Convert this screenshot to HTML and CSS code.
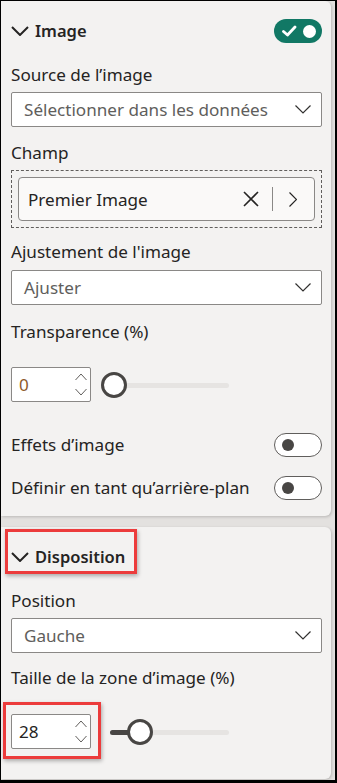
FILE: index.html
```html
<!DOCTYPE html>
<html lang="fr">

<head>
    <meta charset="UTF-8">
    <meta name="viewport" content="width=device-width, initial-scale=1.0">
    <title>Format - Image</title>
    <link rel="stylesheet" href="styles.css">
</head>

<body>

    <div class="frame">

        <!-- Carte Image -->
        <section class="card">
            <div class="card-head">
                <svg class="head-chevron" width="18" height="10" viewBox="0 0 18 10"><path d="M1 1 L9 9 L17 1" fill="none" stroke="#252423" stroke-width="2"/></svg>
                <h2 class="card-title">Image</h2>
                <span class="toggle toggle-on">
                    <svg width="15" height="12" viewBox="0 0 15 12"><path d="M1.5 6.5 L5.5 10 L13 2" fill="none" stroke="#fff" stroke-width="2.8" stroke-linecap="round" stroke-linejoin="round"/></svg>
                    <span class="knob"></span>
                </span>
            </div>

            <div class="field f-source">
                <div class="label">Source de l’image</div>
                <div class="select">
                    <span>Sélectionner dans les données</span>
                    <svg width="16" height="9" viewBox="0 0 16 9"><path d="M0.5 0.5 L8 8 L15.5 0.5" fill="none" stroke="#323130" stroke-width="1.2"/></svg>
                </div>
            </div>

            <div class="field f-champ">
                <div class="label">Champ</div>
                <div class="dropzone">
                    <div class="pill">
                        <span class="pill-text">Premier Image</span>
                        <svg class="pill-x" width="16" height="16" viewBox="0 0 16 16"><path d="M1 1 L15 15 M15 1 L1 15" fill="none" stroke="#252423" stroke-width="1.6"/></svg>
                        <span class="pill-sep"></span>
                        <svg class="pill-next" width="8" height="15" viewBox="0 0 8 15"><path d="M0.5 0.5 L7.5 7.5 L0.5 14.5" fill="none" stroke="#252423" stroke-width="1.2"/></svg>
                    </div>
                </div>
            </div>

            <div class="field f-fit">
                <div class="label">Ajustement de l'image</div>
                <div class="select">
                    <span>Ajuster</span>
                    <svg width="16" height="9" viewBox="0 0 16 9"><path d="M0.5 0.5 L8 8 L15.5 0.5" fill="none" stroke="#323130" stroke-width="1.2"/></svg>
                </div>
            </div>

            <div class="field f-transp">
                <div class="label">Transparence (%)</div>
                <div class="slider-row">
                    <div class="number">
                        <span class="number-value warm">0</span>
                        <span class="spin">
                            <svg width="12" height="8" viewBox="0 0 12 8"><path d="M0.5 7 L6 1 L11.5 7" fill="none" stroke="#605e5c" stroke-width="1"/></svg>
                            <svg width="12" height="8" viewBox="0 0 12 8"><path d="M0.5 1 L6 7 L11.5 1" fill="none" stroke="#605e5c" stroke-width="1"/></svg>
                        </span>
                    </div>
                    <div class="slider">
                        <span class="track"></span>
                        <span class="thumb" style="left: 0px;"></span>
                    </div>
                </div>
            </div>

            <div class="switch-row r-effects">
                <span class="label">Effets d’image</span>
                <span class="toggle toggle-off"><span class="knob"></span></span>
            </div>

            <div class="switch-row r-bg">
                <span class="label">Définir en tant qu’arrière-plan</span>
                <span class="toggle toggle-off"><span class="knob"></span></span>
            </div>
        </section>

        <!-- Carte Disposition -->
        <section class="card card-layout">
            <div class="card-head">
                <svg class="head-chevron" width="18" height="10" viewBox="0 0 18 10"><path d="M1 1 L9 9 L17 1" fill="none" stroke="#252423" stroke-width="2"/></svg>
                <h2 class="card-title">Disposition</h2>
            </div>

            <div class="field f-position">
                <div class="label">Position</div>
                <div class="select">
                    <span>Gauche</span>
                    <svg width="16" height="9" viewBox="0 0 16 9"><path d="M0.5 0.5 L8 8 L15.5 0.5" fill="none" stroke="#323130" stroke-width="1.2"/></svg>
                </div>
            </div>

            <div class="field f-size">
                <div class="label">Taille de la zone d’image (%)</div>
                <div class="slider-row">
                    <div class="number">
                        <span class="number-value">28</span>
                        <span class="spin">
                            <svg width="12" height="8" viewBox="0 0 12 8"><path d="M0.5 7 L6 1 L11.5 7" fill="none" stroke="#605e5c" stroke-width="1"/></svg>
                            <svg width="12" height="8" viewBox="0 0 12 8"><path d="M0.5 1 L6 7 L11.5 1" fill="none" stroke="#605e5c" stroke-width="1"/></svg>
                        </span>
                    </div>
                    <div class="slider">
                        <span class="track"></span>
                        <span class="fill" style="width: 28px;"></span>
                        <span class="thumb" style="left: 26px;"></span>
                    </div>
                </div>
            </div>

            <!-- encadrés rouges d'annotation -->
            <span class="mark mark-head"></span>
            <span class="mark mark-size"></span>
        </section>

    </div>

</body>

</html>
```

FILE: styles.css
```css
* {
    margin: 0;
    padding: 0;
    box-sizing: border-box;
}

body {
    font-family: "Noto Sans", "Open Sans", sans-serif;
    color: #252423;
    background-color: #fff;
}

.frame {
    width: 337px;
    height: 783px;
    border: solid #000;
    border-width: 1px 2px 3px 1px;
    background-color: #e3e1df;
    overflow: hidden;
}

.card {
    position: relative;
    width: 330px;
    height: 515px;
    padding: 18px 9px 0 10px;
    background-color: #f3f2f1;
    border-radius: 0 6px 6px 0;
    box-shadow: 1px 1px 3px rgba(0, 0, 0, 0.18);
}

.card-layout {
    height: 252px;
    margin-top: 11px;
}

.card-head {
    display: flex;
    align-items: center;
    height: 24px;
}

.head-chevron {
    margin-right: 6px;
}

.card-title {
    font-size: 16.5px;
    font-weight: 600;
    line-height: 24px;
}

.toggle {
    display: flex;
    align-items: center;
    width: 48px;
    height: 24px;
    border-radius: 12px;
    margin-left: auto;
}

.toggle-on {
    background-color: #117865;
    padding: 0 6px 0 8px;
    justify-content: space-between;
}

.toggle-on .knob {
    width: 13px;
    height: 13px;
    border-radius: 50%;
    background-color: #fff;
}

.toggle-off {
    background-color: #fff;
    border: 1px solid #605e5c;
    padding-left: 7px;
}

.toggle-off .knob {
    width: 12px;
    height: 12px;
    border-radius: 50%;
    background-color: #484644;
}

.label {
    font-size: 17.1px;
    line-height: 20px;
    color: #252423;
}

.field .label {
    margin-bottom: 7px;
}

.f-source { margin-top: 22px; }
.f-champ { margin-top: 16px; }
.f-fit { margin-top: 14px; }
.f-fit .label { margin-bottom: 8px; }
.f-transp { margin-top: 17px; }
.f-transp .label { margin-bottom: 25px; }
.f-position { margin-top: 22px; }
.f-size { margin-top: 15px; }
.f-size .label { margin-bottom: 26px; }

.select {
    display: flex;
    align-items: center;
    justify-content: space-between;
    height: 35px;
    padding: 0 10px 0 12px;
    background-color: #fff;
    border: 1px solid #8a8886;
    border-radius: 2px;
    font-size: 17.1px;
    color: #605e5c;
}

.dropzone {
    height: 58px;
    padding: 6px;
    border: 1px dashed #605e5c;
}

.pill {
    display: flex;
    align-items: center;
    height: 44px;
    padding: 0 17px 0 9px;
    background-color: #faf9f8;
    border: 1px solid #8a8886;
    border-radius: 4px;
    font-size: 17.1px;
}

.pill-text {
    flex: 1;
}

.pill-sep {
    width: 1px;
    height: 24px;
    margin: 0 16px 0 13px;
    background-color: #8a8886;
}

.slider-row {
    display: flex;
    align-items: center;
    height: 35px;
}

.number {
    display: flex;
    align-items: center;
    justify-content: space-between;
    width: 80px;
    height: 35px;
    padding: 0 3px 0 7px;
    background-color: #fff;
    border: 1px solid #8a8886;
    border-radius: 2px;
    font-size: 17.1px;
}

.number-value.warm {
    color: #8e5a2a;
}

.spin {
    display: flex;
    flex-direction: column;
    gap: 7px;
}

.spin svg {
    display: block;
}

.slider {
    position: relative;
    width: 128px;
    height: 26px;
    margin-left: 10px;
}

.track,
.fill {
    position: absolute;
    top: 11px;
    left: 9px;
    height: 5px;
    border-radius: 3px;
}

.track {
    right: 0;
    background-color: #e6e4e2;
}

.fill {
    background-color: #484644;
}

.thumb {
    position: absolute;
    top: 0;
    width: 26px;
    height: 26px;
    border-radius: 50%;
    background-color: #fff;
    border: 3px solid #484644;
}

.switch-row {
    display: flex;
    align-items: center;
    height: 24px;
}

.r-effects { margin-top: 31px; }
.r-bg { margin-top: 19px; }

.mark {
    position: absolute;
    border: 3px solid #ec3c3c;
    box-shadow: 1px 2px 4px rgba(0, 0, 0, 0.3);
}

.mark-head {
    left: 4px;
    top: 2px;
    width: 132px;
    height: 45px;
}

.mark-size {
    left: 2px;
    top: 175px;
    width: 98px;
    height: 57px;
}
```
